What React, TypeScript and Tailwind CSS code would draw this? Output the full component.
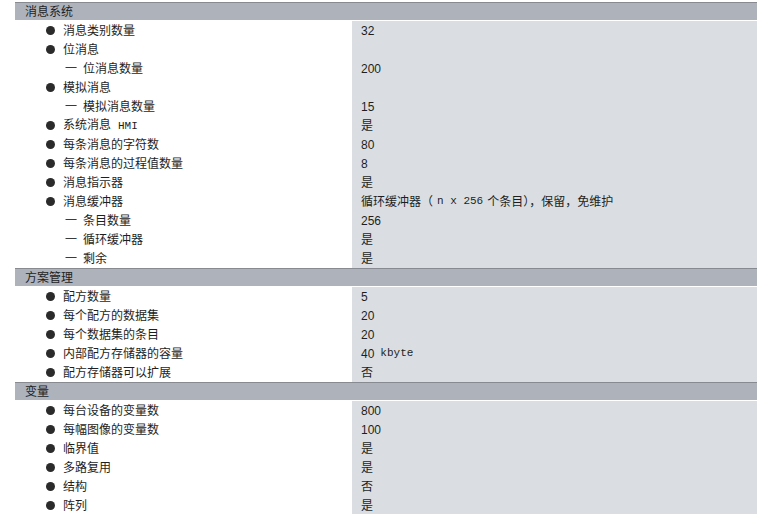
import { FC, ReactElement, ReactNode } from "react";

type Row = { level: 1 | 2; label: ReactNode; value?: ReactNode };
type Section = { title: string; rows: Row[] };

// latin bits inside the chinese text are set in a fixed-width face
const mono = (t: string, cls = "") => (
  <span className={`font-['Liberation_Mono','Noto_Sans_CJK_SC',monospace] text-[11px] ${cls}`}>{t}</span>
);

const sections: Section[] = [
  {
    title: "消息系统",
    rows: [
      { level: 1, label: "消息类别数量", value: "32" },
      { level: 1, label: "位消息" },
      { level: 2, label: "位消息数量", value: "200" },
      { level: 1, label: "模拟消息" },
      { level: 2, label: "模拟消息数量", value: "15" },
      { level: 1, label: <>系统消息{mono("HMI", "ml-[7px]")}</>, value: "是" },
      { level: 1, label: "每条消息的字符数", value: "80" },
      { level: 1, label: "每条消息的过程值数量", value: "8" },
      { level: 1, label: "消息指示器", value: "是" },
      {
        level: 1,
        label: "消息缓冲器",
        value: (
          <>
            循环缓冲器（{mono("n x 256", "mx-[4px]")}个条目），保留，免维护
          </>
        ),
      },
      { level: 2, label: "条目数量", value: "256" },
      { level: 2, label: "循环缓冲器", value: "是" },
      { level: 2, label: "剩余", value: "是" },
    ],
  },
  {
    title: "方案管理",
    rows: [
      { level: 1, label: "配方数量", value: "5" },
      { level: 1, label: "每个配方的数据集", value: "20" },
      { level: 1, label: "每个数据集的条目", value: "20" },
      { level: 1, label: "内部配方存储器的容量", value: <>40{mono("kbyte", "ml-[6px]")}</> },
      { level: 1, label: "配方存储器可以扩展", value: "否" },
    ],
  },
  {
    title: "变量",
    rows: [
      { level: 1, label: "每台设备的变量数", value: "800" },
      { level: 1, label: "每幅图像的变量数", value: "100" },
      { level: 1, label: "临界值", value: "是" },
      { level: 1, label: "多路复用", value: "是" },
      { level: 1, label: "结构", value: "否" },
      { level: 1, label: "阵列", value: "是" },
    ],
  },
];

const SpecRow: FC<{ row: Row }> = ({ row }): ReactElement => (
  <div className="flex h-[19px]">
    <div className="flex w-[337px] items-center bg-white">
      {row.level === 1 ? (
        <>
          <span className="ml-[31px] h-[9px] w-[9px] rounded-full bg-[#2b2b2b]" />
          <span className="ml-[8px]">{row.label}</span>
        </>
      ) : (
        <>
          <span className="ml-[50px] w-[10px] leading-none text-[#3a3a3a]">一</span>
          <span className="ml-[8px]">{row.label}</span>
        </>
      )}
    </div>
    <div className="flex flex-1 items-center bg-[#dadee2] pl-[9px]">{row.value}</div>
  </div>
);

export default function App(): ReactElement {
  return (
    <div className="h-[514px] w-[775px] overflow-hidden bg-white pt-[2px] font-['Liberation_Sans','Noto_Sans_CJK_SC',sans-serif] text-[12px] text-[#1e1e1e]">
      <div className="ml-[15px] w-[742px]">
        {sections.map((s) => (
          <div key={s.title}>
            <div className="h-[19px] border-t border-b border-t-[#878a90] border-b-white bg-[#aeb2bb]">
              <div className="flex h-full items-center pl-[10px]">{s.title}</div>
            </div>
            {s.rows.map((r, i) => (
              <SpecRow key={i} row={r} />
            ))}
          </div>
        ))}
      </div>
    </div>
  );
}
